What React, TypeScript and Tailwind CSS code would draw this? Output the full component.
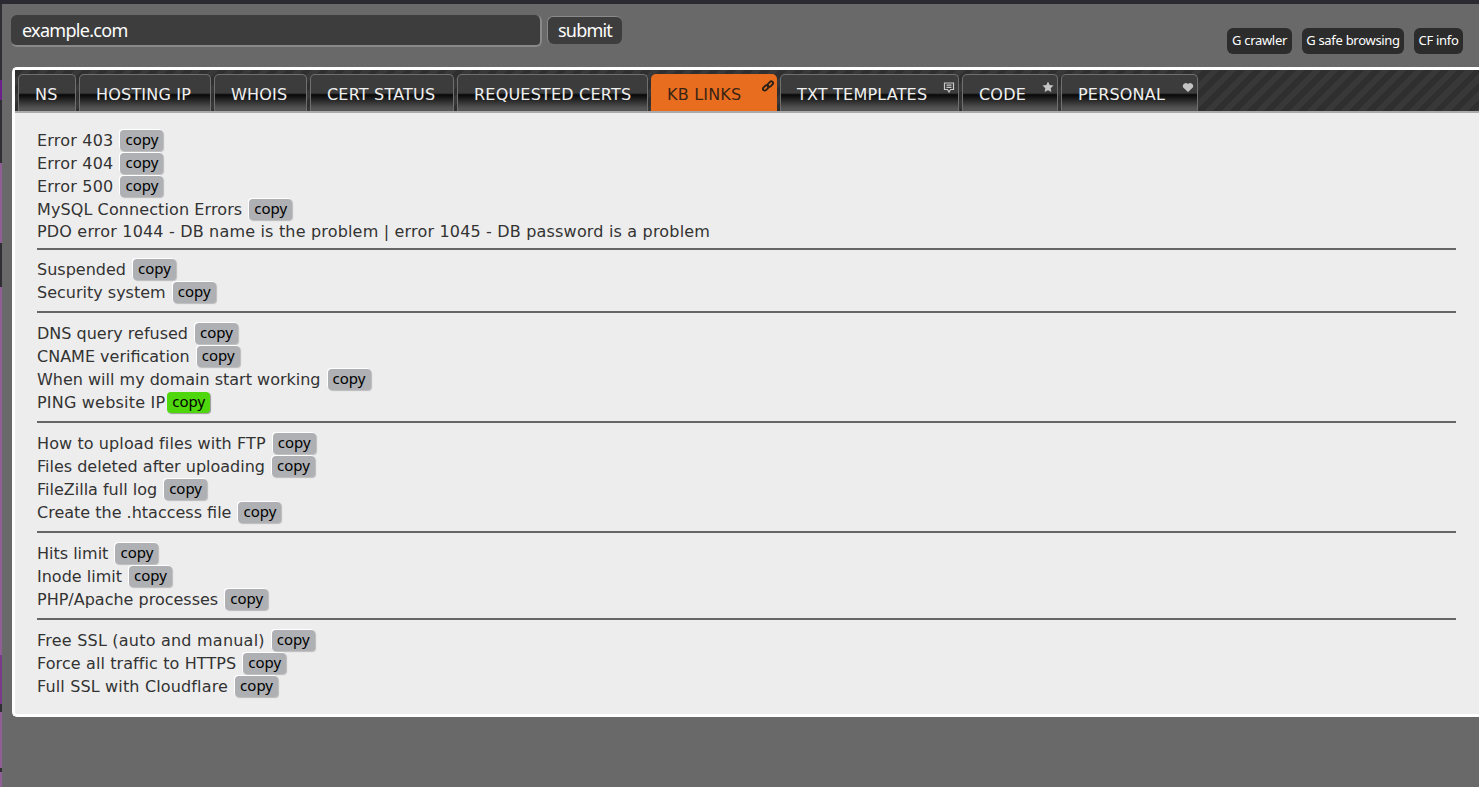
import React from 'react';

type Row = { label: string; green?: boolean; noCopy?: boolean; spacing?: string };

const groups: Row[][] = [
  [
    { label: 'Error 403', spacing: 'tracking-[0.2px]' },
    { label: 'Error 404', spacing: 'tracking-[0.2px]' },
    { label: 'Error 500', spacing: 'tracking-[0.2px]' },
    { label: 'MySQL Connection Errors', spacing: 'tracking-[0.1px]' },
    { label: 'PDO error 1044 - DB name is the problem | error 1045 - DB password is a problem', noCopy: true, spacing: 'tracking-[0.18px]' },
  ],
  [{ label: 'Suspended' }, { label: 'Security system' }],
  [
    { label: 'DNS query refused' },
    { label: 'CNAME verification' },
    { label: 'When will my domain start working' },
    { label: 'PING website IP', green: true, spacing: 'tracking-[0.2px]' },
  ],
  [
    { label: 'How to upload files with FTP', spacing: 'tracking-[0.1px]' },
    { label: 'Files deleted after uploading' },
    { label: 'FileZilla full log' },
    { label: 'Create the .htaccess file' },
  ],
  [{ label: 'Hits limit' }, { label: 'Inode limit' }, { label: 'PHP/Apache processes' }],
  [
    { label: 'Free SSL (auto and manual)', spacing: 'tracking-[0.22px]' },
    { label: 'Force all traffic to HTTPS', spacing: 'tracking-[0.1px]' },
    { label: 'Full SSL with Cloudflare', spacing: 'tracking-[0.15px]' },
  ],
];

const tabs: { label: string; active?: boolean; icon?: React.ReactNode; width: string }[] = [
  { label: 'NS', width: 'w-[58px]' },
  { label: 'HOSTING IP', width: 'w-[132px]' },
  { label: 'WHOIS', width: 'w-[93px]' },
  { label: 'CERT STATUS', width: 'w-[144px]' },
  { label: 'REQUESTED CERTS', width: 'w-[191px]' },
  {
    label: 'KB LINKS',
    active: true,
    width: 'w-[126px]',
    icon: (
      <svg viewBox="0 0 12 12" className="w-[12px] h-[12px]" fill="none" stroke="#2a2118" strokeWidth="1.9">
        <rect x="0.6" y="6.2" width="6" height="3.6" rx="1.8" transform="rotate(-45 3.6 8)" />
        <rect x="5.4" y="2.2" width="6" height="3.6" rx="1.8" transform="rotate(-45 8.4 4)" />
      </svg>
    ),
  },
  {
    label: 'TXT TEMPLATES',
    width: 'w-[179px]',
    icon: (
      <svg viewBox="0 0 12 12" className="w-[12px] h-[12px]" fill="none" stroke="#c8c8c8" strokeWidth="1.2">
        <path d="M1.5 2 H10.5 V8.5 H7.5 L6 11 L4.5 8.5 H1.5 Z" />
        <path d="M3.5 4.2 H8.5 M3.5 6.4 H8.5" />
      </svg>
    ),
  },
  {
    label: 'CODE',
    width: 'w-[96px]',
    icon: (
      <svg viewBox="0 0 12 12" className="w-[12px] h-[12px]" fill="#c4c4c4">
        <path d="M6 .5 L7.7 4 L11.5 4.5 L8.7 7.2 L9.4 11 L6 9.2 L2.6 11 L3.3 7.2 L.5 4.5 L4.3 4 Z" />
      </svg>
    ),
  },
  {
    label: 'PERSONAL',
    width: 'w-[137px]',
    icon: (
      <svg viewBox="0 0 12 12" className="w-[12px] h-[12px]" fill="#c4c4c4">
        <path d="M6 11 L1.2 6.5 A3 3 0 0 1 6 3 A3 3 0 0 1 10.8 6.5 Z" />
      </svg>
    ),
  },
];

// the colored window edge peeking out on the left side
const strip = [
  'h-[76px] bg-[#2f2f33]',
  'h-[20px] bg-[#6a1f8a]',
  'h-[63px] bg-[#2f2f33]',
  'h-[80px] bg-[#8f5f96]',
  'h-[44px] bg-[#2f2f33]',
  'h-[368px] bg-[#8f5f96]',
  'h-[49px] bg-[#7a3a8a]',
  'h-[8px] bg-[#2f2f33]',
  'h-[56px] bg-[#8f5f96]',
  'h-[4px] bg-[#2f2f33]',
  'h-[15px] bg-[#8f5f96]',
];

const chips = [
  { label: 'G crawler', width: 'w-[65px]' },
  { label: 'G safe browsing', width: 'w-[102px]' },
  { label: 'CF info', width: 'w-[49px]' },
];

function CopyButton({ green }: { green?: boolean }) {
  return (
    <button
      type="button"
      className={
        green
          ? "ml-[2px] w-[43px] h-[21px] pb-[2px] font-['Noto_Sans',sans-serif] tracking-normal text-[15px] leading-[19px] text-black rounded-[4px] bg-[#4fd70d] shadow-[1px_1px_1px_#999]"
          : "ml-[7px] w-[43px] h-[21px] pb-[2px] font-['Noto_Sans',sans-serif] tracking-normal text-[15px] leading-[19px] text-black rounded-[4px] bg-[#aeb0b4] shadow-[-1px_-1px_0_#fff,1px_1px_1px_#bbb]"
      }
    >
      copy
    </button>
  );
}

export default function App() {
  return (
    <div className="h-[787px] overflow-hidden bg-[#696969] flex flex-col font-['DejaVu_Sans',sans-serif]">
      <div className="h-[4px] shrink-0 bg-[#2b2a33]" />
      <div className="flex-1 flex min-h-0">
        <div className="w-[2px] shrink-0 flex flex-col">
          {strip.map((s, i) => (
            <div key={i} className={s} />
          ))}
        </div>
        <div className="flex-1 min-w-0 pl-[9px]">
          <div className="flex items-start h-[63px] pt-[11px] font-['Noto_Sans',sans-serif]">
            <div className="w-[531px] h-[32px] pl-[11px] flex items-center rounded-[6px] bg-[#3d3d3d] border-b-2 border-r-2 border-[#8a8a8a] text-[18px] tracking-[-0.7px] text-white">
              example.com
            </div>
            <button
              type="button"
              className="ml-[5px] mt-[1px] w-[75px] h-[28px] rounded-[6px] bg-[#3d3d3d] border-t border-l border-[#8a8a8a] text-[18px] tracking-[-0.8px] text-white"
            >
              submit
            </button>
            <div className="ml-auto mr-[16px] mt-[13px] flex gap-[10px]">
              {chips.map((c) => (
                <span key={c.label} className={`${c.width} h-[26px] flex items-center justify-center rounded-[6px] bg-[#2c2c2c] text-[13px] tracking-[-0.3px] text-white`}>
                  {c.label}
                </span>
              ))}
            </div>
          </div>
          <div className="ml-[1px] border-[3px] border-r-0 border-white rounded-l-[5px] bg-[#ededed] h-[650px]">
            <div className="h-[43px] pl-[3px] pt-[4px] flex items-stretch gap-[3px] border-b-2 border-[#aaaaaa] bg-[repeating-linear-gradient(135deg,#2f2f2f_0,#2f2f2f_6px,#383838_6px,#383838_12px)]">
              {tabs.map((t) => (
                <div
                  key={t.label}
                  className={
                    t.active
                      ? `${t.width} relative rounded-t-[5px] pl-[16px] pt-[4px] flex items-center bg-[#e96d1f] text-[16px] text-[#3a2415] tracking-[0.2px]`
                      : `${t.width} relative rounded-t-[5px] pl-[16px] pt-[4px] flex items-center border border-b-0 border-[#6f6f6f] bg-[linear-gradient(#3c3c3c_0,#3c3c3c_50%,#080808_55%,#555555_92%)] text-[16px] text-[#f0f0f0] tracking-[0.2px]`
                  }
                >
                  {t.label}
                  {t.icon && <span className="absolute top-[6px] right-[3px]">{t.icon}</span>}
                </div>
              ))}
            </div>
            <div className="pl-[22px] pr-[23px] pt-[16px] text-[16px] text-[#333333]">
              {groups.map((g, i) => (
                <div
                  key={i}
                  className={
                    i === groups.length - 1
                      ? ''
                      : i === 0
                        ? 'border-b-2 border-[#666666] pb-[7px] mb-[8px]'
                        : 'border-b-2 border-[#666666] pb-[7px] mb-[9px]'
                  }
                >
                  {g.map((r) => (
                    <div
                      key={r.label}
                      className={`${r.noCopy ? 'h-[20px]' : 'h-[23px]'} ${r.spacing ?? 'tracking-normal'} flex items-center leading-[19px] whitespace-nowrap`}
                    >
                      {r.label}
                      {!r.noCopy && <CopyButton green={r.green} />}
                    </div>
                  ))}
                </div>
              ))}
            </div>
          </div>
        </div>
      </div>
    </div>
  );
}
